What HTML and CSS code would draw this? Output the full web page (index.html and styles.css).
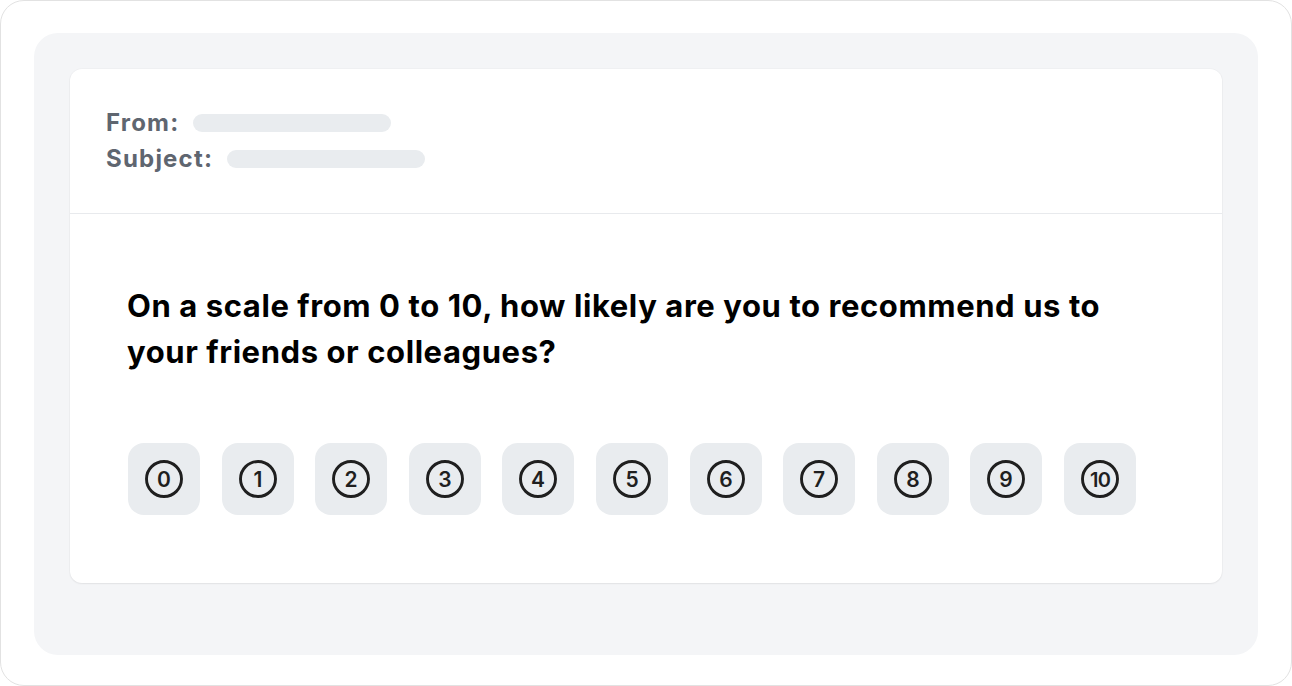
FILE: index.html
```html
<!DOCTYPE html>
<html lang="en">
<head>
<meta charset="utf-8">
<title>NPS Email</title>
<link rel="stylesheet" href="styles.css">
</head>
<body>
<div class="frame">
  <div class="panel">
    <div class="card">
      <div class="card-header">
        <div class="meta-row"><span class="meta-label">From:</span><span class="skeleton"></span></div>
        <div class="meta-row"><span class="meta-label">Subject:</span><span class="skeleton"></span></div>
      </div>
      <div class="card-body">
        <p class="question">On a scale from 0 to 10, how likely are you to recommend us to your friends or colleagues?</p>
        <div class="scale">
          <button class="score"><svg viewBox="0 0 40 40" class="ring"><circle cx="20" cy="20" r="17.5"/><text x="20" y="27.5">0</text></svg></button>
          <button class="score"><svg viewBox="0 0 40 40" class="ring"><circle cx="20" cy="20" r="17.5"/><text x="20" y="27.5">1</text></svg></button>
          <button class="score"><svg viewBox="0 0 40 40" class="ring"><circle cx="20" cy="20" r="17.5"/><text x="20" y="27.5">2</text></svg></button>
          <button class="score"><svg viewBox="0 0 40 40" class="ring"><circle cx="20" cy="20" r="17.5"/><text x="20" y="27.5">3</text></svg></button>
          <button class="score"><svg viewBox="0 0 40 40" class="ring"><circle cx="20" cy="20" r="17.5"/><text x="20" y="27.5">4</text></svg></button>
          <button class="score"><svg viewBox="0 0 40 40" class="ring"><circle cx="20" cy="20" r="17.5"/><text x="20" y="27.5">5</text></svg></button>
          <button class="score"><svg viewBox="0 0 40 40" class="ring"><circle cx="20" cy="20" r="17.5"/><text x="20" y="27.5">6</text></svg></button>
          <button class="score"><svg viewBox="0 0 40 40" class="ring"><circle cx="20" cy="20" r="17.5"/><text x="20" y="27.5">7</text></svg></button>
          <button class="score"><svg viewBox="0 0 40 40" class="ring"><circle cx="20" cy="20" r="17.5"/><text x="20" y="27.5">8</text></svg></button>
          <button class="score"><svg viewBox="0 0 40 40" class="ring"><circle cx="20" cy="20" r="17.5"/><text x="20" y="27.5">9</text></svg></button>
          <button class="score"><svg viewBox="0 0 40 40" class="ring"><circle cx="20" cy="20" r="17.5"/><text x="20" y="27.5" class="two">10</text></svg></button>
        </div>
      </div>
    </div>
  </div>
</div>
</body>
</html>
```
FILE: styles.css
```css
* { box-sizing: border-box; }
html, body { margin: 0; padding: 0; background: #ffffff; }
body { font-family: Inter, "Noto Sans", "Liberation Sans", sans-serif; }

.frame {
  width: 1292px;
  height: 686px;
  border: 1px solid #e2e2e2;
  border-radius: 24px;
  padding: 32px 33px 30px 33px;
  background: #ffffff;
}

.panel {
  background: #f4f5f7;
  border-radius: 24px;
  padding: 36px 36px 72px 36px;
}

.card {
  background: #ffffff;
  border-radius: 12px;
  box-shadow: 0 1px 2px rgba(0, 0, 0, 0.06), 0 0 0 1px rgba(0, 0, 0, 0.02);
}

.card-header {
  padding: 36px 36px;
  border-bottom: 1px solid #e8eaed;
}

.meta-row {
  display: flex;
  align-items: center;
  gap: 14px;
  height: 36px;
}

.meta-label {
  font-size: 24px;
  font-weight: 700;
  color: #5f6670;
  line-height: 36px;
  letter-spacing: 1.2px;
}

.skeleton {
  display: block;
  width: 198px;
  height: 18px;
  border-radius: 9px;
  background: #e9ecef;
}

.card-body {
  padding: 69px 57px 68px 57px;
}

.question {
  margin: 0;
  font-size: 31px;
  line-height: 46px;
  font-weight: 700;
  color: #000000;
  max-width: 1000px;
  letter-spacing: 0.58px;
}

.scale {
  display: flex;
  gap: 21.6px;
  margin-top: 68px;
  padding-left: 1px;
}

.score {
  width: 72px;
  height: 72px;
  flex: 0 0 72px;
  border: none;
  border-radius: 16px;
  background: #e9ecef;
  padding: 0;
  display: flex;
  align-items: center;
  justify-content: center;
  cursor: pointer;
}

.ring {
  width: 40px;
  height: 40px;
}

.ring circle {
  fill: none;
  stroke: #1f1f1f;
  stroke-width: 2.9;
}

.ring text {
  font-family: Inter, "Noto Sans", sans-serif;
  font-size: 21px;
  font-weight: 600;
  fill: #1f1f1f;
  text-anchor: middle;
}

.ring text.two {
  letter-spacing: -0.8px;
  font-size: 20px;
}
```
